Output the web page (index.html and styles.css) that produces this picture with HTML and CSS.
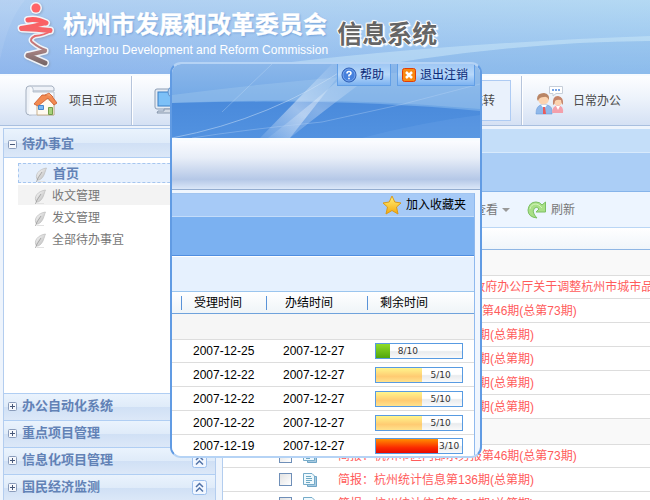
FILE: index.html
```html
<!DOCTYPE html>
<html lang="zh-CN">
<head>
<meta charset="utf-8">
<title>杭州市发展和改革委员会信息系统</title>
<link rel="stylesheet" href="styles.css">
</head>
<body>
<svg class="defs" aria-hidden="true">
  <defs>
    <linearGradient id="leaf" x1="0" y1="0" x2="1" y2="1"><stop offset="0" stop-color="#fff"/><stop offset="1" stop-color="#b4b4b4"/></linearGradient>
    <linearGradient id="ink" gradientUnits="userSpaceOnUse" x1="0" y1="12" x2="0" y2="65"><stop offset="0" stop-color="#ff5a5f"/><stop offset=".35" stop-color="#f4676a"/><stop offset=".7" stop-color="#a48080"/><stop offset="1" stop-color="#6c6263"/></linearGradient>
    <linearGradient id="gold" x1="0" y1="0" x2="0" y2="1"><stop offset="0" stop-color="#fff27a"/><stop offset="1" stop-color="#f5a90c"/></linearGradient>
    <linearGradient id="beam" x1="0" y1="1" x2="1" y2="0"><stop offset="0" stop-color="#fff" stop-opacity=".1"/><stop offset=".4" stop-color="#fff" stop-opacity=".45"/><stop offset="1" stop-color="#fff" stop-opacity="0"/></linearGradient>
    <linearGradient id="sky" x1="0" y1="0" x2="0" y2="1"><stop offset="0" stop-color="#8bb7ea"/><stop offset="1" stop-color="#5a9ae2"/></linearGradient>
    <linearGradient id="deep" x1="0" y1="0" x2="0" y2="1"><stop offset="0" stop-color="#4a8adb"/><stop offset="1" stop-color="#5292e0"/></linearGradient>
    <symbol id="feather" viewBox="0 0 14 16">
      <path d="M3.500 14C0 9 5 3 12.500 2C11 5 10.500 12 5 14Z" fill="url(#leaf)" stroke="#bdbdbd" stroke-width=".7"/>
      <path d="M2.500 16L4 12L8 6" fill="none" stroke="#999" stroke-width=".8"/>
      <path d="M4 15.500H11" stroke="#e2e2e2"/>
    </symbol>
    <symbol id="plus" viewBox="0 0 9 9">
      <rect x=".5" y=".5" width="8" height="8" rx="1" fill="#f6f8fc" stroke="#8a9cbb"/><path d="M2 4.500H7M4.500 2V7" stroke="#48597a"/>
    </symbol>
    <symbol id="minus" viewBox="0 0 9 9">
      <rect x=".5" y=".5" width="8" height="8" rx="1" fill="#f6f8fc" stroke="#8a9cbb"/><path d="M2 4.500H7" stroke="#48597a"/>
    </symbol>
    <symbol id="doc" viewBox="0 0 14 14">
      <path d="M4.500 3.500H13.500V13.500H4.500Z" fill="#a9cbe2" stroke="#6fa5c6"/>
      <path d="M.5 .5H9L11.500 3V11.500H.5Z" fill="#eff9fd" stroke="#75abc9"/>
      <path d="M3 3.500H8M3 5.500H9M3 7.500H9M3 9.500H7" stroke="#6fa9c4"/>
    </symbol>
    <symbol id="collapse" viewBox="0 0 15 15">
      <rect x=".5" y=".5" width="14" height="14" rx="2" fill="#f2f7ff" stroke="#9dbfec"/>
      <path d="M4 7L7.500 3.500L11 7M4 11.500L7.500 8L11 11.500" fill="none" stroke="#5273a8" stroke-width="1.500"/>
    </symbol>
    <g id="ribbon" fill="none" stroke-linecap="round" stroke-linejoin="round">
      <path class="thick" d="M11 18Q19 16 29 21"/>
      <path class="mid" d="M29 21Q18 24 4 26"/>
      <path class="thick" d="M5 26.500Q20 27 33 28.500"/>
      <path class="thin" d="M34 29Q28 33 18 34Q12 37 15 40Q22 46 29 48"/>
      <path class="mid" d="M28 49Q20 51 11 53"/>
      <path class="thick" d="M11 53.500Q19 57 28 61"/>
    </g>
  </defs>
</svg>

<header class="banner">
  <svg class="banner-art" viewBox="0 0 650 74" preserveAspectRatio="none" aria-hidden="true">
    <path d="M0 0H25Q8 20 0 60Z" fill="#fff" opacity=".08"/>
    <path d="M200 74Q400 45 650 36V41Q500 42 330 74Z" fill="#d8effa" opacity=".4"/>
    <path d="M330 74Q500 42 650 41V74Z" fill="#82b3e8" opacity=".2"/>
  </svg>
  <svg class="logo" viewBox="0 0 38 66" aria-hidden="true">
    <circle cx="19" cy="6" r="6" fill="#fff" opacity=".85"/>
    <use href="#ribbon" class="halo"/>
    <circle cx="19" cy="6" r="4.500" fill="#ff6468"/>
    <use href="#ribbon" class="ink"/>
  </svg>
  <div class="brand">
    <h1 class="brand-name">杭州市发展和改革委员会</h1>
    <p class="brand-en">Hangzhou Development and Reform Commission</p>
  </div>
  <p class="system-name">信息系统</p>
</header>

<nav class="nav">
  <a class="nav-item first" href="#">
    <svg class="nav-icon" viewBox="0 0 32 32" aria-hidden="true">
      <path d="M4 1H27Q30 2 29 6H8V28Q8 30 5 30Q1 30 1 27V5Q1 1 4 1Z" fill="#eef2f8" stroke="#a4afbf"/>
      <path d="M5 1Q9 2 8 7H29V30H4" fill="#f8fafd" stroke="#b8c2d0"/>
      <path d="M12 19L20 12L29 19V30H12Z" fill="#fffaf0" stroke="#c9b18f"/>
      <path d="M9 19L17 10H26L32 18L29 20L23 13L13 21Z" fill="#f28a52" stroke="#c9582a" stroke-width=".8"/>
      <path d="M20 10L24 8L28 12" fill="#f5a06d" stroke="#c9582a" stroke-width=".7"/>
      <path d="M13.500 20.500H18.500V24.500H13.500Z" fill="#79b9f4" stroke="#4586cd"/>
      <path d="M23.500 22.500H27.500V29.500H23.500Z" fill="#a8d27c" stroke="#719d48"/>
    </svg>项目立项</a>
  <a class="nav-item" href="#">
    <svg class="nav-icon" viewBox="0 0 32 32" aria-hidden="true">
      <rect x="1" y="4" width="28" height="20" rx="2" fill="#e4eaf2" stroke="#8b9db5"/>
      <rect x="4" y="7" width="22" height="14" fill="#7cc0f7" stroke="#397fc5"/>
      <path d="M10 24H20L22 28H3L4 26H10Z" fill="#d3dbe6" stroke="#8797ad"/>
      <circle cx="20" cy="7" r="6" fill="#a8cff5" stroke="#5f90c9"/>
    </svg></a>
  <span class="nav-item" aria-hidden="true"></span>
  <a class="nav-item current" href="#"><span class="nav-box">公文流转</span></a>
  <a class="nav-item last" href="#">
    <svg class="nav-icon" viewBox="0 0 32 32" aria-hidden="true">
      <path d="M15.500 1.500H28.500V8.500H22L19 11V8.500H15.500Z" fill="#fff" stroke="#c6ced9"/>
      <path d="M18 5H20M21 5H23M24 5H26" stroke="#78a5e8" stroke-width="2"/>
      <path d="M2 29Q2 21 7 20H13Q19 21 18 29Z" fill="#8fb8ea" stroke="#6a9bd8" stroke-width=".6"/>
      <path d="M7 20L10 24L13 20Z" fill="#fff"/><path d="M9 22H11L12 29H9Z" fill="#ea5b5b"/>
      <circle cx="9.500" cy="14" r="5.500" fill="#fbd3b0"/><path d="M3 14Q3 8 10 8Q16 9 15 15Q13 11 10 12Q5 12 4 16Z" fill="#b98565"/>
      <path d="M18 28Q18 21 24 20Q30 21 29 28Z" fill="#f4a0ab"/><path d="M22 21L24 25L26 21Z" fill="#fff"/>
      <circle cx="24" cy="16" r="4.500" fill="#fbd3b0"/><path d="M19 20Q18 11 24 11Q30 12 29 20Q27 18 27 15Q23 14 21 16Q21 19 19 20Z" fill="#c4846b"/>
    </svg>日常办公</a>
</nav>

<div class="workspace">
  <aside class="sidebar">
    <button class="section-head"><svg class="toggle" aria-hidden="true"><use href="#minus"/></svg>待办事宜</button>
    <ul class="menu">
      <li><a class="menu-link active" href="#"><svg class="feather" aria-hidden="true"><use href="#feather"/></svg>首页</a></li>
      <li><a class="menu-link hover" href="#"><svg class="feather" aria-hidden="true"><use href="#feather"/></svg>收文管理</a></li>
      <li><a class="menu-link" href="#"><svg class="feather" aria-hidden="true"><use href="#feather"/></svg>发文管理</a></li>
      <li><a class="menu-link" href="#"><svg class="feather" aria-hidden="true"><use href="#feather"/></svg>全部待办事宜</a></li>
    </ul>
    <button class="section-head"><svg class="toggle" aria-hidden="true"><use href="#plus"/></svg>办公自动化系统<svg class="collapse" aria-hidden="true"><use href="#collapse"/></svg></button>
    <button class="section-head"><svg class="toggle" aria-hidden="true"><use href="#plus"/></svg>重点项目管理<svg class="collapse" aria-hidden="true"><use href="#collapse"/></svg></button>
    <button class="section-head"><svg class="toggle" aria-hidden="true"><use href="#plus"/></svg>信息化项目管理<svg class="collapse" aria-hidden="true"><use href="#collapse"/></svg></button>
    <button class="section-head"><svg class="toggle" aria-hidden="true"><use href="#plus"/></svg>国民经济监测<svg class="collapse" aria-hidden="true"><use href="#collapse"/></svg></button>
  </aside>

  <main class="main">
    <div class="main-title"></div>
    <div class="main-band"></div>
    <div class="toolbar">
      <button class="tool">查看<span class="caret"></span></button>
      <button class="tool"><svg class="refresh" viewBox="0 0 20 18" aria-hidden="true">
        <path d="M10 17Q1 16 1 9Q2 1 9 1Q13 1 15 4L18.500 1V11H9L12 8Q10 5 7.500 7Q5 10 7 13Q8 15 10 17Z" fill="#a9e088" stroke="#7cc063"/>
        <path d="M3 8Q4 3 9 3Q12 3 15 7" fill="none" stroke="#d2f3b8"/>
      </svg>刷新</button>
    </div>
    <div class="list-head"></div>
    <div class="group"></div>
    <ul class="list">
      <li class="list-row"><input type="checkbox" class="check" id="c1"><svg class="doc" aria-hidden="true"><use href="#doc"/></svg><label for="c1">简报：转发浙江省人民政 政府办公厅关于调整杭州市城市品</label></li>
      <li class="list-row"><input type="checkbox" class="check" id="c2"><svg class="doc" aria-hidden="true"><use href="#doc"/></svg><label for="c2">简报：杭州市区内部水务报第46期(总第73期)</label></li>
      <li class="list-row"><input type="checkbox" class="check" id="c3"><svg class="doc" aria-hidden="true"><use href="#doc"/></svg><label for="c3">简报：杭州统计信息第136期(总第期)</label></li>
      <li class="list-row"><input type="checkbox" class="check" id="c4"><svg class="doc" aria-hidden="true"><use href="#doc"/></svg><label for="c4">简报：杭州统计信息第136期(总第期)</label></li>
      <li class="list-row"><input type="checkbox" class="check" id="c5"><svg class="doc" aria-hidden="true"><use href="#doc"/></svg><label for="c5">简报：杭州统计信息第136期(总第期)</label></li>
      <li class="list-row"><input type="checkbox" class="check" id="c6"><svg class="doc" aria-hidden="true"><use href="#doc"/></svg><label for="c6">简报：杭州统计信息第136期(总第期)</label></li>
    </ul>
    <div class="group"></div>
    <ul class="list">
      <li class="list-row"><input type="checkbox" class="check" id="c7"><svg class="doc" aria-hidden="true"><use href="#doc"/></svg><label for="c7">简报：杭州市区内部水务报第46期(总第73期)</label></li>
      <li class="list-row"><input type="checkbox" class="check" id="c8"><svg class="doc" aria-hidden="true"><use href="#doc"/></svg><label for="c8">简报：杭州统计信息第136期(总第期)</label></li>
      <li class="list-row"><input type="checkbox" class="check" id="c9"><svg class="doc" aria-hidden="true"><use href="#doc"/></svg><label for="c9">简报：杭州统计信息第136期(总第期)</label></li>
    </ul>
  </main>
</div>

<section class="popup" aria-label="待办详情">
  <div class="popup-hero">
    <svg class="hero-art" viewBox="0 0 308 74" preserveAspectRatio="none" aria-hidden="true">
      <rect width="308" height="74" fill="url(#sky)"/>
      <path d="M0 31Q130 14 308 3V45Q160 32 0 39Z" fill="#a5cbef" opacity=".35"/>
      <path d="M0 39Q170 34 308 47V74H0Z" fill="url(#deep)"/>
      <path d="M88 74L160 0H176L118 74Z" fill="url(#beam)"/>
      <path d="M118 74Q160 40 215 0H185Q140 40 96 74Z" fill="url(#beam)" opacity=".7"/>
      <path d="M0 74Q100 55 180 0" fill="none" stroke="#cfe3f8" opacity=".5"/>
      <path d="M50 48L100 0" fill="none" stroke="#cfe3f8" opacity=".3"/>
      <path d="M20 74Q70 66 150 58Q230 42 308 20" fill="none" stroke="#bcd8f6" opacity=".35"/>
      <path d="M190 74Q250 58 308 51V74Z" fill="#8fbaf0" opacity=".15"/>
    </svg>
    <button class="hero-btn"><svg class="hero-icon" viewBox="0 0 16 16" aria-hidden="true"><circle cx="8" cy="8" r="7" fill="#4580dd" stroke="#2857ae"/><circle cx="8" cy="8" r="6" fill="none" stroke="#8db6f3" stroke-width=".7"/><path d="M6 6.500Q6 4.500 8 4.500Q10 4.500 10 6.200Q10 7.300 8 8.300V9.500M8 10.800V12.300" fill="none" stroke="#fff" stroke-width="1.600"/></svg>帮助</button>
    <button class="hero-btn"><svg class="hero-icon" viewBox="0 0 16 16" aria-hidden="true"><rect x="1.500" y="1.500" width="13" height="13" rx="2" fill="#f88a12" stroke="#e03d08"/><path d="M5 5L11 11M11 5L5 11" stroke="#fff" stroke-width="2.500"/></svg>退出注销</button>
  </div>
  <div class="popup-silver"></div>
  <div class="popup-panel">
    <div class="fav-bar"><button class="fav"><svg class="star" viewBox="0 0 20 20" aria-hidden="true"><path d="M10 1L12.800 7L19 8L14.500 12L16 19L10 15.500L4 19L5.500 12L1 8L7.200 7Z" fill="url(#gold)" stroke="#d99a1b"/></svg>加入收藏夹</button></div>
    <div class="panel-band"></div>
    <div class="panel-light"></div>
    <table class="tasks">
      <thead><tr><th class="start"><span>受理时间</span></th><th class="end"><span>办结时间</span></th><th class="left"><span>剩余时间</span></th></tr></thead>
      <tbody>
        <tr class="spacer"><td colspan="3"></td></tr>
        <tr class="edge"><td>2007-12-25</td><td>2007-12-27</td><td><div class="meter"><span class="fill green" style="width:16%"></span><span class="meter-text">8/10</span></div></td></tr>
        <tr><td>2007-12-22</td><td>2007-12-27</td><td><div class="meter"><span class="fill yellow" style="width:54%"></span><span class="meter-text">5/10</span></div></td></tr>
        <tr><td>2007-12-22</td><td>2007-12-27</td><td><div class="meter"><span class="fill yellow" style="width:54%"></span><span class="meter-text">5/10</span></div></td></tr>
        <tr><td>2007-12-22</td><td>2007-12-27</td><td><div class="meter"><span class="fill yellow" style="width:54%"></span><span class="meter-text">5/10</span></div></td></tr>
        <tr><td>2007-12-19</td><td>2007-12-27</td><td><div class="meter"><span class="fill red" style="width:72%"></span><span class="meter-text tight">3/10</span></div></td></tr>
      </tbody>
    </table>
  </div>
</section>
</body>
</html>
```

FILE: styles.css
```css
* { box-sizing: border-box; }

html { height: 100%; overflow: hidden; }

body {
  margin: 0;
  height: 100%;
  overflow: hidden;
  position: relative;
  display: flex;
  flex-direction: column;
  background: #eef4fc;
  color: #4a4a4a;
  font: 12px/16px "Liberation Sans", "Noto Sans CJK SC", sans-serif;
}

button {
  font: inherit;
  color: inherit;
  margin: 0;
  padding: 0;
  border: 0;
  background: none;
  display: flex;
  align-items: center;
}

a { color: inherit; text-decoration: none; }
ul { list-style: none; margin: 0; padding: 0; }
.defs { position: absolute; width: 0; height: 0; }

/* Banner */
.banner {
  position: relative;
  flex: none;
  height: 74px;
  display: flex;
  align-items: flex-start;
  padding-left: 17px;
  background: linear-gradient(90deg, rgba(170, 195, 240, .4), rgba(180, 222, 245, .35)), linear-gradient(#b4d6f2, #7cadea);
}
.banner-art { position: absolute; inset: 0; width: 100%; height: 100%; }
.logo { position: relative; width: 38px; height: 66px; margin-top: 2px; overflow: visible; filter: drop-shadow(1px 1px 1px #8ba4c4); }
.ink { stroke: url(#ink); --grow: 0px; }
.halo { stroke: #fff; --grow: 3px; opacity: .85; }
.thick { stroke-width: calc(5px + var(--grow)); }
.mid { stroke-width: calc(4px + var(--grow)); }
.thin { stroke-width: calc(2px + var(--grow)); }
.brand { position: relative; margin: 9px 0 0 8px; color: #fff; }
.brand-name { margin: 0; font-size: 24px; line-height: 32px; font-weight: 700; white-space: nowrap; text-shadow: 1px 1px 2px #6f9fd8; -webkit-text-stroke: .3px #fff; }
.brand-en { margin: 1px 0 0 1px; font-size: 12px; line-height: 16px; white-space: nowrap; }
.system-name {
  position: relative;
  margin: 17px 0 0 9px;
  color: #666;
  font-size: 25px;
  line-height: 34px;
  font-weight: 700;
  white-space: nowrap;
  text-shadow: 1px 0 #fff, -1px 0 #fff, 0 1px #fff, 0 -1px #fff, 2px 2px 1px #fff, -1px -1px 1px #fff;
}

/* Navigation */
.nav {
  flex: none;
  display: flex;
  height: 52px;
  border-top: 2px solid #f7fbff;
  border-bottom: 1px solid #a9bfdf;
  background: linear-gradient(#fdfeff, #edf3fb 45%, #d5e1f4);
}
.nav-item {
  flex: 0 0 130px;
  display: flex;
  align-items: center;
  gap: 12px;
  padding-left: 22px;
  border-right: 1px solid #b6c5dc;
  box-shadow: 1px 0 #fff;
}
.nav-item.first { flex-basis: 132px; padding-left: 25px; }
.nav-item.current { padding: 4px 10px 4px 4px; }
.nav-item.last { flex: 1; padding-left: 12px; gap: 7px; border: 0; box-shadow: none; }
.nav-icon { width: 32px; height: 32px; flex: none; }
.nav-box {
  flex: 1;
  align-self: stretch;
  display: flex;
  align-items: center;
  justify-content: flex-end;
  padding-right: 15px;
  border: 1px solid #aecbf3;
  background: #e9f1fc;
}

/* Two columns */
.workspace { flex: 1; min-height: 0; display: flex; gap: 6px; padding: 2px 0 0 3px; }

.sidebar {
  flex: 0 0 213px;
  display: flex;
  flex-direction: column;
  overflow: hidden;
  border: 1px solid #b3cdef;
  border-bottom: 0;
  background: #fff;
}
.section-head {
  flex: none;
  height: 27px;
  padding: 0 8px 2px 4px;
  gap: 5px;
  border-top: 1px solid #b0cef3;
  background: linear-gradient(#eaf3fd, #dfebf9 50%, #d0e0f5 50%, #dce8f8);
  color: #6282b6;
  font-size: 13px;
  font-weight: 700;
  text-align: left;
}
.section-head:first-child { height: 29px; padding-bottom: 0; padding-top: 2px; border-top: 0; border-bottom: 1px solid #b0cef3; }
.toggle { width: 9px; height: 9px; }
.collapse { width: 15px; height: 15px; margin-left: auto; }
.menu { flex: none; display: grid; align-content: start; gap: 2px; height: 235px; padding: 5px 0 0 14px; }
.menu-link { display: flex; align-items: center; height: 20px; padding: 2px 0 0 15px; gap: 5px; color: #777; }
.menu-link.active { border: 1px dashed #a6c6ef; background: #e6f0fd; color: #6282b6; font-size: 13px; font-weight: 700; }
.menu-link.hover { background: #f3f3f3; }
.feather { width: 14px; height: 16px; }

.main {
  flex: 1;
  min-width: 0;
  margin-top: 1px;
  overflow: hidden;
  border-left: 1px solid #b3cdef;
  background: #fff;
}
.main-title { height: 24px; border-bottom: 1px solid #d8eafc; background: #c4def9; }
.main-band { height: 39px; border-bottom: 1px solid #86b4ea; background: #abcef6; }
.toolbar {
  display: flex;
  align-items: center;
  height: 36px;
  padding-left: 251px;
  gap: 17px;
  border-bottom: 1px solid #bad6f5;
  background: #edf5ff;
  color: #777;
}
.tool { gap: 4px; }
.caret { border: 4px solid transparent; border-top-color: #999; border-bottom: 0; }
.refresh { width: 20px; height: 18px; }
.list-head { height: 22px; border-bottom: 1px solid #8fb6e4; background: linear-gradient(#fff, #f0f5fa); }
.group { height: 26px; border-bottom: 1px solid #ddd; background: #f9f9f9; }
.list-row {
  display: flex;
  align-items: center;
  height: 24px;
  padding-left: 56px;
  border-bottom: 1px solid #ddd;
  color: #ff5b5b;
  white-space: nowrap;
}
.list-row:first-child { height: 23px; }
.check { appearance: none; flex: none; width: 13px; height: 13px; margin: 0 11px 0 0; border: 1px solid #6f8fb8; background: linear-gradient(135deg, #e2e2e2, #fff); }
.doc { flex: none; width: 14px; height: 14px; margin-right: 21px; }

/* Floating panel */
.popup {
  position: absolute;
  left: 170px;
  top: 62px;
  width: 312px;
  overflow: hidden;
  border: 2px solid #619be3;
  border-top-color: #b5d3f5;
  border-bottom-color: #b5d3f5;
  border-radius: 11px;
  background: #f0f6fe;
  color: #000;
}
.popup-hero { position: relative; display: flex; justify-content: flex-end; align-items: flex-start; height: 74px; padding-right: 5px; gap: 6px; }
.hero-art { position: absolute; inset: 0; width: 100%; height: 100%; }
.hero-btn {
  position: relative;
  height: 22px;
  padding: 0 6px 0 3px;
  gap: 3px;
  border: 1px solid #629fe6;
  border-top: 0;
  background: linear-gradient(#9fc7f4, #b8d8fa 50%, #7db3f1);
  color: #0b2a78;
}
.hero-icon { width: 16px; height: 16px; }
.popup-silver { height: 52px; border-top: 3px solid #f8fcff; border-bottom: 1px solid #94add0; background: linear-gradient(#fbfcff, #e8eef8 35%, #b5c8e7 80%, #dbe7f8); }
.popup-panel { margin: 3px 5px 0 0; border-right: 1px solid #8fb9ee; border-top: 1px solid #a2c5f0; background: #fff; }
.fav-bar { display: flex; justify-content: flex-end; height: 23px; padding-right: 8px; border-bottom: 1px solid #c3dcfa; background: #a6caf7; }
.fav { gap: 4px; }
.star { width: 20px; height: 20px; }
.panel-band { height: 39px; border-bottom: 1px solid #508ee0; background: #7bb1f1; }
.panel-light { height: 36px; border-top: 1px solid #fff; border-bottom: 1px solid #9bc5ee; background: #e6f1fe; }

.tasks { width: 100%; border-collapse: separate; border-spacing: 0; table-layout: fixed; }
.tasks th { height: 22px; padding: 0; font-weight: 400; text-align: left; border-bottom: 1px solid #6fa2dc; background: linear-gradient(#fff, #eff4f8); }
.tasks th span { display: block; line-height: 14px; border-left: 1px solid #5a93d8; }
.start { width: 94px; }
.end { width: 101px; }
.tasks .start span { margin-left: 9px; padding-left: 12px; }
.tasks .end span { padding-left: 18px; }
.tasks .left span { padding-left: 12px; }
.tasks td { height: 24px; padding: 0; border-bottom: 1px solid #ddd; }
.tasks td:nth-child(1) { padding-left: 21px; }
.tasks td:nth-child(2) { padding-left: 17px; }
.tasks td:nth-child(3) { padding-left: 8px; }
.tasks .spacer td { height: 26px; padding: 0; background: #f6f6f6; }
.tasks .edge td { height: 23px; }
.tasks tr:last-child td { height: 21px; border-bottom: 0; }

.meter { display: flex; align-items: stretch; width: 88px; height: 16px; border: 1px solid #589be2; background: linear-gradient(#fff 45%, #e9ebed 55%, #fafafa); }
.fill { flex: none; }
.fill.green { background: linear-gradient(#90dc28, #51a60f); }
.fill.yellow { background: linear-gradient(#fff58c, #ffcb72 60%, #ffe28d); }
.fill.red { background: linear-gradient(#ff8e00, #fb2d00 60%, #e90800); }
.meter-text { padding-left: 8px; color: #333; font: 9px/14px "DejaVu Sans", sans-serif; }
.meter-text.tight { padding-left: 1px; }
```
